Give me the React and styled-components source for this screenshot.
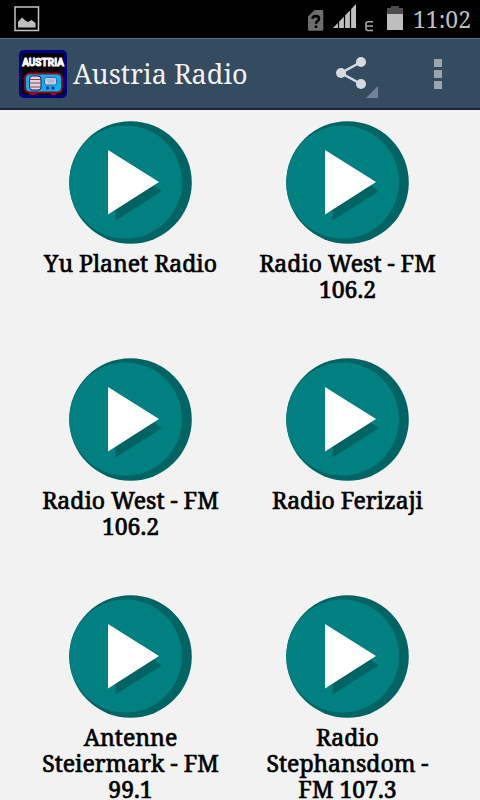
import React from "react";
import styled, { createGlobalStyle } from "styled-components";

const GlobalStyle = createGlobalStyle`
  * {
    box-sizing: border-box;
  }

  body {
    margin: 0;
    background-color: #f2f2f2;
    font-family: "Noto Serif", "DejaVu Serif Condensed", "DejaVu Serif", serif;
  }
`;

const Screen = styled.div`
  display: flex;
  flex-direction: column;
  height: 100vh;
  overflow: hidden;
`;

const StatusBar = styled.div`
  display: flex;
  align-items: center;
  justify-content: space-between;
  flex-shrink: 0;
  height: 38px;
  padding: 0 9px 0 14px;
  background-color: #000;
`;

const StatusIcons = styled.div`
  display: flex;
  align-items: center;
`;

const Clock = styled.time`
  margin-left: 9px;
  color: #bebebe;
  font-size: 23px;
  line-height: 38px;
`;

const ActionBar = styled.header`
  display: flex;
  align-items: center;
  flex-shrink: 0;
  height: 72px;
  padding-left: 19px;
  border-top: 1px solid #5d7488;
  border-bottom: 2px solid #1a2836;
  background-color: #354b60;
`;

const Title = styled.h1`
  flex: 1;
  margin: 0 0 0 6px;
  color: #f2f2f2;
  font-size: 27px;
  font-weight: normal;
  line-height: 36px;
  white-space: nowrap;
`;

const IconButton = styled.button`
  display: flex;
  align-items: center;
  justify-content: center;
  width: ${(props) => props.$width};
  height: 100%;
  padding: 0;
  border: none;
  background: none;
  cursor: pointer;
`;

const StationList = styled.main`
  display: grid;
  grid-template-columns: repeat(2, 1fr);
  grid-auto-rows: minmax(221px, auto);
  gap: 16px 32px;
  flex: 1;
  align-content: start;
  padding: 11px 40px 16px 38px;
  overflow-y: auto;
  scrollbar-width: none;
`;

const Station = styled.button`
  display: flex;
  align-items: center;
  flex-direction: column;
  padding: 0;
  border: none;
  background: none;
  color: #000;
  font-family: inherit;
  cursor: pointer;
`;

const StationName = styled.span`
  margin-top: 6px;
  font-size: 23px;
  line-height: 26px;
  text-align: center;
  -webkit-text-stroke: 0.03em #000;
`;

const stations = [
  "Yu Planet Radio",
  "Radio West - FM 106.2",
  "Radio West - FM 106.2",
  "Radio Ferizaji",
  "Antenne Steiermark - FM 99.1",
  "Radio Stephansdom - FM 107.3",
];

function PictureIcon() {
  return (
    <svg width="26" height="26" viewBox="0 0 26 26" aria-hidden="true">
      <rect x="1" y="1" width="23.5" height="23.5" fill="none" stroke="#c4c4c4" strokeWidth="1.5" />
      <path d="M4 21.500V16l4-4.500 4 3.500 2 1 3.500-2 4 3v4.500z" fill="#bebebe" />
    </svg>
  );
}

function SystemIcons() {
  return (
    <svg width="97" height="38" viewBox="307 0 97 38" aria-hidden="true">
      <path d="M308 16.500L314.500 10H322a1.300 1.300 0 0 1 1.300 1.300V29.500a1.300 1.300 0 0 1-1.300 1.300H309.300a1.300 1.300 0 0 1-1.300-1.300z" fill="#6d6d6d" />
      <path d="M312.500 18.700c0-3.500 6.500-3.500 6.500 0 0 2.500-3 2.300-3 5M316 25.500v2.500" fill="none" stroke="#000" strokeWidth="2.600" />
      <path d="M333 28L356 4V28z" fill="#bebebe" />
      <path d="M338.500 4v24M344.500 4v24M350.500 4v24" stroke="#000" strokeWidth="1.200" />
      <path d="M373 21.700h-5q-2 0-2 2V28.500q0 2 2 2h5M366 26h7" fill="none" stroke="#a8a8a8" strokeWidth="1.600" />
      <path d="M387 8h4V6h8v2h4v6h-16z" fill="#4d4d4d" />
      <path d="M387 14h16v16h-16z" fill="#bebebe" />
    </svg>
  );
}

function RadioLogo() {
  return (
    <svg width="48" height="48" viewBox="0 0 48 48" role="img" aria-label="Austria">
      <rect width="48" height="48" rx="5" fill="#000080" />
      <rect x="3" y="3" width="42" height="42" rx="3" fill="#080008" />
      <text
        x="24"
        y="16"
        fill="#fff"
        stroke="#fff"
        strokeWidth="0.8"
        textAnchor="middle"
        fontFamily="Roboto, sans-serif"
        fontSize="10"
        fontWeight="700"
      >
        AUSTRIA
      </text>
      <path d="M10 42h7l-1 3h-5zM31 42h7l-1 3h-5z" fill="#a00018" />
      <rect x="6" y="23.500" width="37" height="19" rx="5" fill="#00b4f4" stroke="#a00018" strokeWidth="2" />
      <rect x="10.500" y="26" width="11.500" height="14" rx="3" fill="#dcd4dc" stroke="#102060" />
      <path d="M10 29.500h12M10 33h12M10 37h12" stroke="#a03848" strokeWidth="1.200" />
      <rect x="25.500" y="27.500" width="12" height="7.500" rx="2" fill="#c8d0e4" stroke="#4060a0" />
      <path d="M27 30h9M29 32h6" stroke="#8090b8" strokeWidth="0.700" />
      <circle cx="28.500" cy="38" r="1.500" fill="#001878" />
      <circle cx="34" cy="38" r="1.500" fill="#001878" />
    </svg>
  );
}

function ShareIcon() {
  return (
    <svg width="44" height="50" viewBox="335 49 44 50" aria-hidden="true">
      <path d="M361 62L341 73L361 84" fill="none" stroke="#d6dbe0" strokeWidth="2.500" />
      <circle cx="361" cy="62" r="5" fill="#d6dbe0" />
      <circle cx="341" cy="73" r="5" fill="#d6dbe0" />
      <circle cx="361" cy="84" r="5" fill="#d6dbe0" />
      <path d="M378 86v12h-12z" fill="#728393" />
    </svg>
  );
}

function MoreIcon() {
  return (
    <svg width="8" height="30" viewBox="0 0 8 30" fill="#9aa5b0" aria-hidden="true">
      <path d="M0 0h8v8H0zM0 11h8v8H0zM0 22h8v8H0z" />
    </svg>
  );
}

function PlayIcon() {
  return (
    <svg width="123" height="123" viewBox="0 0 123 123" aria-hidden="true">
      <defs>
        <clipPath id="disc">
          <circle cx="61.500" cy="61.500" r="61.300" />
        </clipPath>
      </defs>
      <circle cx="61.500" cy="61.500" r="61.300" fill="#006464" />
      <circle cx="56.500" cy="61" r="56.500" fill="#008080" clipPath="url(#disc)" />
      <path d="M46.500 99.500V80l38-16 8 6.500z" fill="#006464" />
      <path d="M39 29V93.500L90 61z" fill="#fff" />
    </svg>
  );
}

export default function App() {
  return (
    <>
      <GlobalStyle />
      <Screen>
        <StatusBar>
          <PictureIcon />
          <StatusIcons>
            <SystemIcons />
            <Clock>11:02</Clock>
          </StatusIcons>
        </StatusBar>
        <ActionBar>
          <RadioLogo />
          <Title>Austria Radio</Title>
          <IconButton $width="78px" aria-label="Share">
            <ShareIcon />
          </IconButton>
          <IconButton $width="84px" aria-label="More options">
            <MoreIcon />
          </IconButton>
        </ActionBar>
        <StationList>
          {stations.map((name, index) => (
            <Station key={index}>
              <PlayIcon />
              <StationName>{name}</StationName>
            </Station>
          ))}
        </StationList>
      </Screen>
    </>
  );
}
